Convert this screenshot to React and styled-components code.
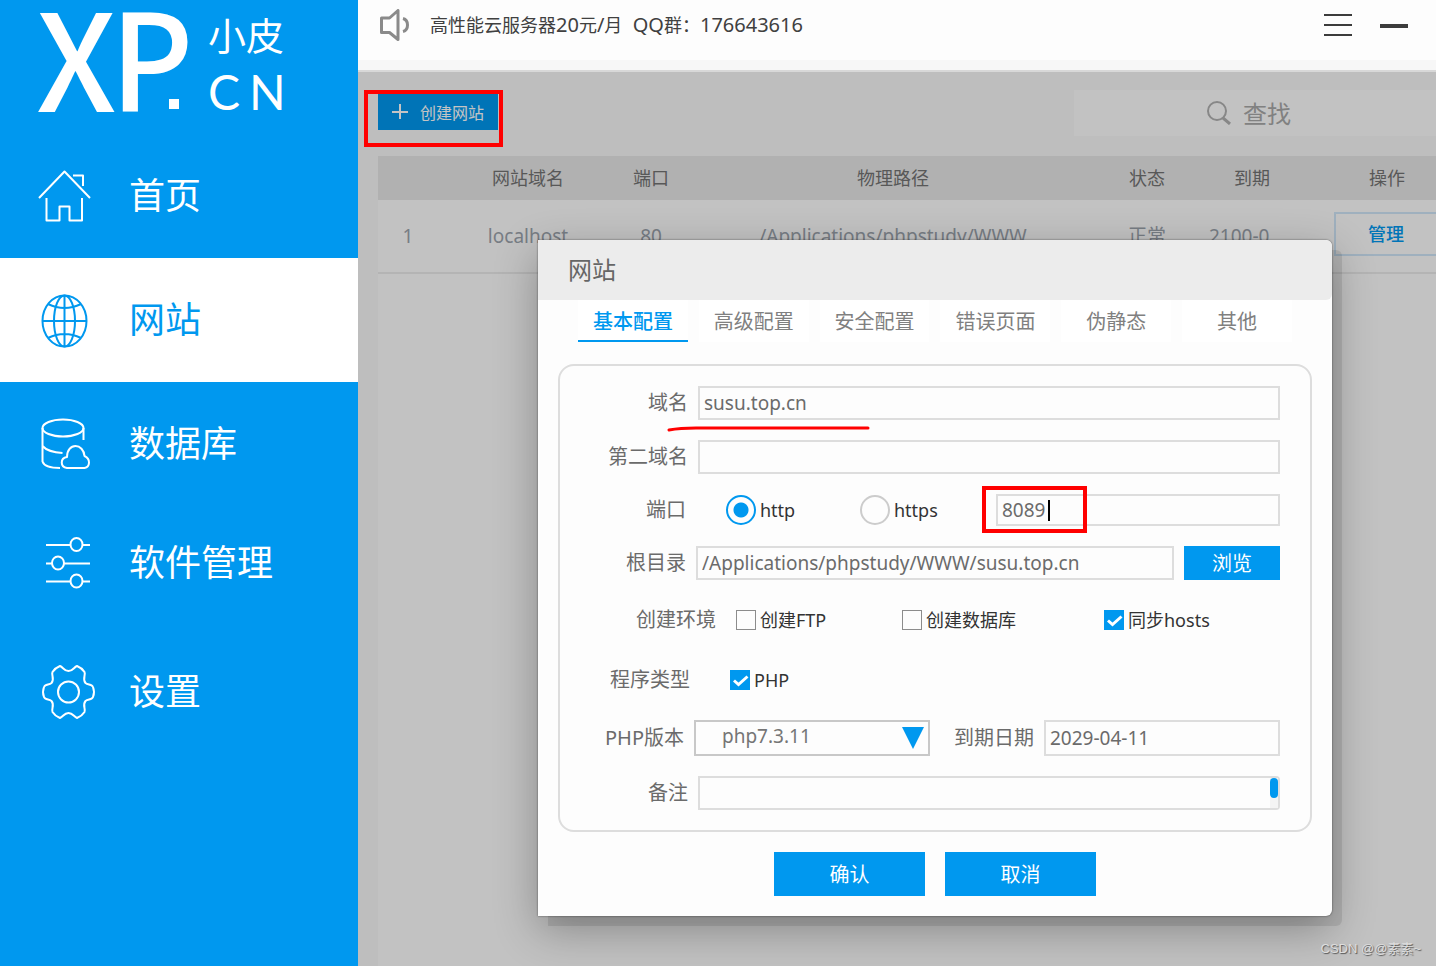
import React, { useState } from 'react';
import styled, { createGlobalStyle } from 'styled-components';

const blue = '#0098ef';
const sans = '"Noto Sans", "Noto Sans CJK SC", sans-serif';

const GlobalStyle = createGlobalStyle`
  * {
    box-sizing: border-box;
  }
  body {
    margin: 0;
    font-family: ${sans};
    font-size: 18px;
    color: #666;
  }
  button, input, select, textarea {
    font-family: inherit;
    margin: 0;
  }
`

const Page = styled.div`
  display: flex;
  min-height: 100vh;
`

/* sidebar */

const Sidebar = styled.aside`
  flex: 0 0 358px;
  background: ${blue};
`

const LogoBox = styled.div`
  height: 134px;
  padding-left: 36px;

  svg {
    display: block;
    overflow: visible;
    fill: white;
  }
`

const NavLink = styled.a`
  display: flex;
  align-items: center;
  gap: 37px;
  height: ${props => props.$height}px;
  padding-left: 38px;
  font-size: 36px;
  line-height: 52px;
  text-decoration: none;
  color: ${props => (props.$active ? blue : 'white')};
  background: ${props => (props.$active ? 'white' : 'transparent')};
`

const NavIcon = styled.svg`
  width: 54px;
  height: 54px;
  overflow: visible;
  fill: none;
  stroke: currentColor;
  stroke-width: 2;
  stroke-linejoin: round;
`

/* main column */

const Main = styled.main`
  flex: 1;
  min-width: 0;
  display: flex;
  flex-direction: column;
`

const TopBar = styled.header`
  display: flex;
  align-items: center;
  height: 72px;
  padding: 0 28px 20px 21px;
  background: linear-gradient(#fdfdfd 60px, #f7f7f7 60px);
  border-bottom: 2px solid #d8d8d8;
`

const Notice = styled.p`
  flex: 1;
  margin: 0 0 0 21px;
  line-height: 28px;
  white-space: pre;
  color: #404040;
`

const Latin = styled.span`
  font-size: 20px;
`

const WindowButtons = styled.div`
  display: flex;
  gap: 28px;
`

const WindowButton = styled.button`
  display: block;
  padding: 0;
  border: 0;
  background: none;
  color: #3c3c3c;

  svg {
    display: block;
  }
`

const Content = styled.div`
  position: relative;
  flex: 1;
  display: grid;
  background: #f7f7f7;

  > * {
    grid-area: 1 / 1;
    min-width: 0;
  }
`

const SitePage = styled.section`
  display: flex;
  flex-direction: column;
  padding-left: 20px;
`

const Toolbar = styled.div`
  display: flex;
  justify-content: space-between;
  padding: 18px 0 20px;
`

const CreateWrap = styled.div`
  position: relative;
  padding-top: 4px;
`

const CreateButton = styled.button`
  display: flex;
  align-items: center;
  justify-content: center;
  gap: 12px;
  width: 120px;
  height: 36px;
  padding: 0;
  border: 0;
  background: ${blue};
  color: white;
  font-size: 16px;
`

const RedBox = styled.span`
  position: absolute;
  z-index: 3;
  top: ${props => props.$top}px;
  left: ${props => props.$left}px;
  width: ${props => props.$width}px;
  height: ${props => props.$height}px;
  border: 4px solid #ff0000;
  pointer-events: none;
`

const SearchBox = styled.label`
  display: flex;
  align-items: center;
  gap: 12px;
  width: 362px;
  height: 46px;
  padding-left: 133px;
  background: #fdfdfd;
  color: #b0b0b0;
`

const SearchInput = styled.input`
  flex: 1;
  min-width: 0;
  height: 46px;
  padding: 0;
  border: 0;
  background: none;
  font-size: 24px;

  &::placeholder {
    color: #a8a8a8;
  }
`

const TablePanel = styled.div`
  flex: 1;
  background: #fdfdfd;
`

const SiteTable = styled.table`
  width: 100%;
  table-layout: fixed;
  border-collapse: separate;
  border-spacing: 0;
  line-height: 26px;
`

const Col = styled.col`
  width: ${props => (props.$width ? `${props.$width}px` : 'auto')};
`

const HeadCell = styled.th`
  height: 44px;
  padding: 0 0 0 ${props => props.$indent || 0}px;
  background: #e7e7e7;
  font-weight: 400;
  color: #737373;
`

const Cell = styled.td`
  height: 74px;
  padding: 0 0 0 ${props => props.$indent || 0}px;
  border-bottom: 2px solid #eaeaea;
  text-align: ${props => props.$align || 'center'};
  font-size: 19px;
  white-space: nowrap;
  color: #9ba3ac;
`

const ManageButton = styled.button`
  display: block;
  width: 100%;
  height: 44px;
  margin-bottom: 4px;
  padding: 0 0 2px;
  border: 2px solid #cfe6f7;
  border-right: 0;
  background: none;
  color: ${blue};
  font-size: 18px;
  font-weight: 500;
`

/* dialog */

const Overlay = styled.div`
  z-index: 2;
  padding: 168px 104px 50px 180px;
  background: rgba(0, 0, 0, 0.23);
`

const Dialog = styled.div`
  border-radius: 0 6px 6px 0;
  background: #fdfdfd;
  box-shadow: 0 0 2px rgba(0, 0, 0, 0.6), 10px 10px 0 rgba(0, 0, 0, 0.09),
    0 14px 44px rgba(0, 0, 0, 0.3);
`

const DialogTitle = styled.h2`
  height: 60px;
  margin: 0;
  padding-left: 30px;
  border-radius: 0 6px 6px 0;
  background: #ececec;
  font-size: 24px;
  font-weight: 400;
  line-height: 60px;
  color: #666;
`

const Tabs = styled.div`
  display: flex;
  gap: 11px;
  padding: 0 40px;
`

const Tab = styled.button`
  width: 110px;
  height: 42px;
  padding: 0;
  border: 0;
  border-bottom: 2px solid ${props => (props.$active ? blue : 'transparent')};
  background: white;
  font-size: 20px;
  font-weight: ${props => (props.$active ? 500 : 400)};
  color: ${props => (props.$active ? blue : '#808080')};
`

const FormBox = styled.div`
  display: flex;
  flex-direction: column;
  gap: 20px;
  margin: 22px 20px 20px;
  padding: 20px 30px 20px 0;
  border: 2px solid #ddd;
  border-radius: 16px;
`

const Row = styled.div`
  position: relative;
  display: flex;
  align-items: center;
  gap: ${props => props.$gap || 10}px;
  min-height: ${props => props.$height || 34}px;
`

const Label = styled.label`
  flex: 0 0 ${props => (props.$width ? `${props.$width}px` : 'auto')};
  text-align: right;
  font-size: 20px;
  line-height: 30px;
  color: #6b6b6b;
`

const Field = styled.div`
  position: relative;
  flex: 1;
  min-width: 0;
  display: flex;
`

const TextInput = styled.input`
  flex: 1;
  min-width: 0;
  width: 100%;
  height: ${props => props.$height || 34}px;
  padding: 0 4px;
  border: 2px solid #ddd;
  border-radius: 0;
  outline: 0;
  background: #fdfdfd;
  font-size: 19px;
  color: #6b6b6b;
`

const Options = styled.div`
  flex: 1;
  display: grid;
  grid-template-columns: ${props => props.$columns};
  align-items: center;
`

const Option = styled.label`
  display: flex;
  align-items: center;
  gap: 4px;
  font-size: 18px;
  line-height: 26px;
  color: #333;
`

const Radio = styled.input`
  appearance: none;
  width: 30px;
  height: 30px;
  border: 2px solid #ccc;
  border-radius: 50%;

  &:checked {
    border-color: ${blue};
    background: radial-gradient(circle, ${blue} 7px, transparent 8px);
  }
`

const TickBox = styled.span`
  display: grid;

  > * {
    grid-area: 1 / 1;
  }

  svg {
    pointer-events: none;
  }
`

const TickInput = styled.input`
  appearance: none;
  width: 20px;
  height: 20px;
  border: 1px solid #8c8c8c;

  &:checked {
    border: 0;
    background: ${blue};
  }
`

const Caret = styled.span`
  position: absolute;
  top: 6px;
  left: 52px;
  width: 2px;
  height: 21px;
  background: black;
`

const BlueButton = styled.button`
  width: ${props => props.$width}px;
  height: ${props => props.$height}px;
  padding: 0 0 2px;
  border: 0;
  background: ${blue};
  color: white;
  font-size: 20px;
`

const SelectBox = styled.div`
  flex: 1;
  min-width: 0;
  display: grid;
  align-items: center;

  > * {
    grid-area: 1 / 1;
  }

  svg {
    justify-self: end;
    margin-right: 6px;
    pointer-events: none;
  }
`

const Select = styled.select`
  appearance: none;
  width: 100%;
  height: 36px;
  padding: 0 40px 4px 26px;
  border: 2px solid #c8c8c8;
  border-radius: 0;
  background: #fdfdfd;
  font-size: 19px;
  color: #757575;
`

const MemoBox = styled.div`
  flex: 1;
  display: flex;
  height: 34px;
  border: 2px solid #ddd;
  border-radius: 0 4px 4px 0;
`

const Memo = styled.textarea`
  flex: 1;
  padding: 0 4px;
  border: 0;
  outline: 0;
  resize: none;
  background: none;
  font-size: 19px;
`

const ScrollTrack = styled.div`
  width: 8px;
  background: #f4f4f4;
`

const ScrollThumb = styled.div`
  height: 20px;
  border-radius: 4px;
  background: ${blue};
`

const Underline = styled.svg`
  position: absolute;
  left: 106px;
  top: 38px;
  z-index: 3;
  pointer-events: none;
`

const Actions = styled.div`
  display: flex;
  justify-content: center;
  gap: 20px;
  padding-bottom: 20px;
`

const Watermark = styled.span`
  position: absolute;
  z-index: 4;
  right: 15px;
  bottom: 6px;
  font-family: "Liberation Sans", "Noto Sans CJK SC", sans-serif;
  font-size: 13px;
  line-height: 22px;
  color: #dedede;
  text-shadow: 1px 1px 1px #555;
`

const icons = {
  home: (
    <>
      <path d="M1 29 26.5 2.5 52 29M35 6.5h10V17" />
      <path d="M8.500 29V51.500H21.500V37.500H31.500V51.500H44V29" />
    </>
  ),
  globe: (
    <>
      <ellipse cx="26.500" cy="28" rx="22" ry="25.500" />
      <ellipse cx="26.500" cy="28" rx="10.500" ry="25.500" />
      <path d="M26.500 2.500v51M4.500 28h44M10 11q16.500 8 33 0M10 45q16.500-8 33 0" />
    </>
  ),
  database: (
    <>
      <ellipse cx="25" cy="11" rx="20.500" ry="8.500" />
      <path d="M4.500 11V44.500C6 49 13 51 22 51M4.500 29C8 33 15 35.500 24.500 36M45.500 11V23" />
      <path d="M29 51C22 50 22 41 29 40 29 33 33 29 37.500 29S46 33 46.500 39C53 42 52 50 46.500 51Z" />
    </>
  ),
  sliders: (
    <>
      <path d="M8 9H32.500M44.500 9H52M8 27.500H14M26 27.500H52M8 45.500H32.500M44.500 45.500H52" />
      <ellipse cx="38.500" cy="8.500" rx="6" ry="6.500" />
      <ellipse cx="20" cy="27" rx="6" ry="6.500" />
      <ellipse cx="38.500" cy="45" rx="6" ry="6.500" />
    </>
  ),
  gear: (
    <>
      <path d="M22 1C25 2 26 6 30.500 6S36 2 39 1Q44 3 46.500 7C48 10 44 14 47.500 18 50 20 54 19 55 22Q57 27 55 32C54 35 50 34 47.500 36 44 40 48 44 46.500 47Q44 51 39 53C36 52 35 48 30.500 48S25 52 22 53Q17 51 14.500 47C13 44 17 40 13.500 36 11 34 7 35 6 32Q4 27 6 22C7 19 11 20 13.500 18 17 14 13 10 14.500 7Q17 3 22 1Z" />
      <circle cx="30.500" cy="27" r="10.500" />
    </>
  )
}

const navItems = [
  { label: '首页', icon: 'home', height: 124 },
  { label: '网站', icon: 'globe', height: 124, active: true },
  { label: '数据库', icon: 'database', height: 124 },
  { label: '软件管理', icon: 'sliders', height: 114 },
  { label: '设置', icon: 'gear', height: 144 }
]

const tabs = ['基本配置', '高级配置', '安全配置', '错误页面', '伪静态', '其他']

const Logo = () => (
  <LogoBox>
    <svg width="260" height="134" role="img" aria-label="XP.CN 小皮">
      <text y="112" fontWeight="500">
        <tspan x="0" fontFamily="Noto Sans CJK SC" fontSize="135">X</tspan>
        <tspan x="74" fontFamily="Noto Sans" fontSize="138">P</tspan>
      </text>
      <rect x="133" y="99" width="10" height="10" />
      <text x="172 210" y="50" fontFamily="Noto Sans CJK SC" fontSize="38">小皮</text>
      <text x="172 213" y="110" fontFamily="Lato" fontSize="48">CN</text>
    </svg>
  </LogoBox>
)

const Check = ({ label, checked }) => (
  <Option>
    <TickBox>
      <TickInput type="checkbox" defaultChecked={checked} />
      {checked && (
        <svg width="20" height="20" fill="none" stroke="white" strokeWidth="3">
          <path d="M4 10.500 8.500 14.500 17.500 6.500" />
        </svg>
      )}
    </TickBox>
    {label}
  </Option>
)

const SiteForm = () => {
  const [scheme, setScheme] = useState('http')

  return (
    <FormBox>
      <Row>
        <Label $width={128} htmlFor="domain">域名</Label>
        <TextInput id="domain" defaultValue="susu.top.cn" />
        <Underline width="206" height="10" fill="none" stroke="#ff0000" strokeWidth="3" strokeLinecap="round">
          <path d="M3 6Q14 4 30 4H202" />
        </Underline>
      </Row>
      <Row>
        <Label $width={128} htmlFor="domain2">第二域名</Label>
        <TextInput id="domain2" />
      </Row>
      <Row $gap={40} $height={32}>
        <Label $width={126} htmlFor="port">端口</Label>
        <Options $columns="134px 136px 1fr">
          {['http', 'https'].map((name) => (
            <Option key={name}>
              <Radio
                type="radio"
                name="scheme"
                checked={scheme === name}
                onChange={() => setScheme(name)} />
              {name}
            </Option>
          ))}
          <Field>
            <TextInput id="port" $height={32} defaultValue="8089" />
            <Caret />
            <RedBox $top={-8} $left={-14} $width={105} $height={47} />
          </Field>
        </Options>
      </Row>
      <Row>
        <Label $width={126} htmlFor="root-dir">根目录</Label>
        <TextInput id="root-dir" defaultValue="/Applications/phpstudy/WWW/susu.top.cn" />
        <BlueButton type="button" $width={96} $height={34}>浏览</BlueButton>
      </Row>
      <Row $gap={20} $height={40}>
        <Label as="span" $width={156}>创建环境</Label>
        <Options $columns="166px 202px 1fr">
          <Check label="创建FTP" />
          <Check label="创建数据库" />
          <Check label="同步hosts" checked />
        </Options>
      </Row>
      <Row $gap={40} $height={40}>
        <Label as="span" $width={130}>程序类型</Label>
        <Check label="PHP" checked />
      </Row>
      <Row $height={36}>
        <Label $width={124} htmlFor="php-version">PHP版本</Label>
        <SelectBox>
          <Select id="php-version">
            <option>php7.3.11</option>
          </Select>
          <svg width="22" height="22" fill={blue}>
            <path d="M0 0H22L11 22Z" />
          </svg>
        </SelectBox>
        <Label $width={94} htmlFor="expires">到期日期</Label>
        <Field>
          <TextInput id="expires" defaultValue="2029-04-11" $height={36} />
        </Field>
      </Row>
      <Row>
        <Label $width={128} htmlFor="memo">备注</Label>
        <MemoBox>
          <Memo id="memo" rows="1" />
          <ScrollTrack>
            <ScrollThumb />
          </ScrollTrack>
        </MemoBox>
      </Row>
    </FormBox>
  )
}

const App = () => {
  return (
    <Page>
      <GlobalStyle />
      <Sidebar>
        <Logo />
        <nav>
          {navItems.map((item) => (
            <NavLink key={item.label} href="#" $active={item.active} $height={item.height}>
              <NavIcon>{icons[item.icon]}</NavIcon>
              {item.label}
            </NavLink>
          ))}
        </nav>
      </Sidebar>
      <Main>
        <TopBar>
          <svg width="30" height="32" fill="none" stroke="#8a8a8a" strokeWidth="3" strokeLinejoin="round">
            <path d="M2.500 9H10.500L19 1.500V30.500L10.500 23.500H2.500Z" />
            <path d="M24 9.500C30 11 30 21 24 22.500" />
          </svg>
          <Notice>
            高性能云服务器<Latin>20</Latin>元<Latin>/</Latin>月<Latin>{'  QQ'}</Latin>群：<Latin>176643616</Latin>
          </Notice>
          <WindowButtons>
            <WindowButton aria-label="菜单">
              <svg width="28" height="22" fill="currentColor">
                <path d="M0 0H28V2H0ZM0 10H28V12H0ZM0 20H28V22H0Z" />
              </svg>
            </WindowButton>
            <WindowButton aria-label="最小化">
              <svg width="28" height="22" fill="currentColor">
                <path d="M0 10H28V14H0Z" />
              </svg>
            </WindowButton>
          </WindowButtons>
        </TopBar>
        <Content>
          <SitePage>
            <Toolbar>
              <CreateWrap>
                <CreateButton>
                  <svg width="16" height="16" stroke="currentColor" strokeWidth="2">
                    <path d="M8 0V15M0 8H16" />
                  </svg>
                  创建网站
                </CreateButton>
                <RedBox $top={0} $left={-14} $width={139} $height={57} />
              </CreateWrap>
              <SearchBox>
                <svg width="24" height="24" fill="none" stroke="currentColor" strokeWidth="2">
                  <circle cx="10" cy="10" r="9" />
                  <path d="M16 17 23 23" strokeWidth="3" />
                </svg>
                <SearchInput placeholder="查找" aria-label="查找" />
              </SearchBox>
            </Toolbar>
            <TablePanel>
              <SiteTable>
                <colgroup>
                  <Col $width={60} />
                  <Col $width={180} />
                  <Col $width={66} />
                  <Col />
                  <Col $width={90} />
                  <Col $width={120} />
                  <Col $width={124} />
                </colgroup>
                <thead>
                  <tr>
                    <HeadCell />
                    <HeadCell>网站域名</HeadCell>
                    <HeadCell>端口</HeadCell>
                    <HeadCell>物理路径</HeadCell>
                    <HeadCell>状态</HeadCell>
                    <HeadCell>到期</HeadCell>
                    <HeadCell $indent={26}>操作</HeadCell>
                  </tr>
                </thead>
                <tbody>
                  <tr>
                    <Cell>1</Cell>
                    <Cell>localhost</Cell>
                    <Cell>80</Cell>
                    <Cell>/Applications/phpstudy/WWW</Cell>
                    <Cell>正常</Cell>
                    <Cell $align="left" $indent={17}>2100-0</Cell>
                    <Cell $indent={22}>
                      <ManageButton>管理</ManageButton>
                    </Cell>
                  </tr>
                </tbody>
              </SiteTable>
            </TablePanel>
          </SitePage>
          <Overlay>
            <Dialog role="dialog" aria-labelledby="dialog-title">
              <DialogTitle id="dialog-title">网站</DialogTitle>
              <Tabs>
                {tabs.map((name, i) => (
                  <Tab key={name} $active={i === 0}>{name}</Tab>
                ))}
              </Tabs>
              <SiteForm />
              <Actions>
                <BlueButton $width={151} $height={44}>确认</BlueButton>
                <BlueButton $width={151} $height={44}>取消</BlueButton>
              </Actions>
            </Dialog>
          </Overlay>
          <Watermark>CSDN @@素素~</Watermark>
        </Content>
      </Main>
    </Page>
  )
}

export default App
